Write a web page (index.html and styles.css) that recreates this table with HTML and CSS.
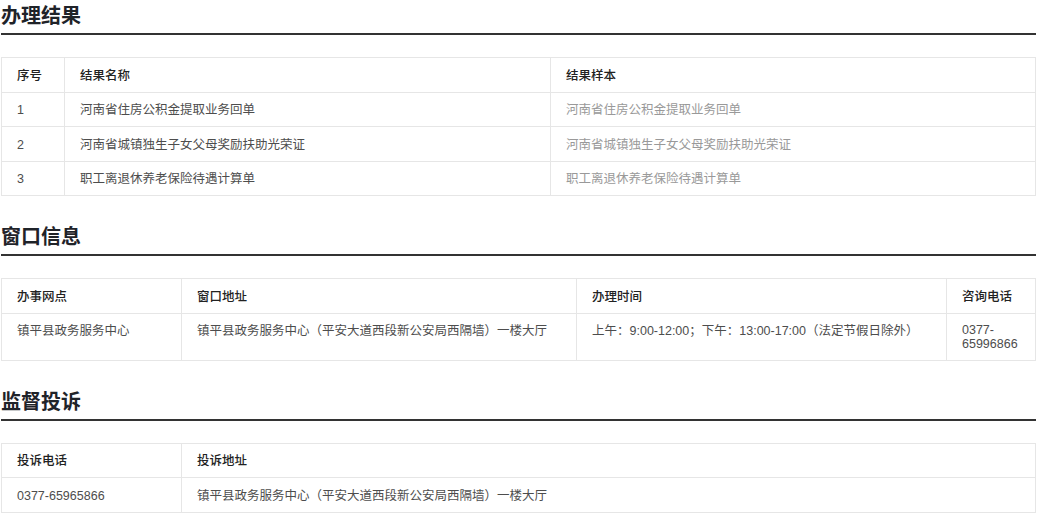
FILE: index.html
```html
<!DOCTYPE html>
<html lang="zh-CN">
<head>
<meta charset="utf-8">
<title>办理结果</title>
<link rel="stylesheet" href="styles.css">
</head>
<body>
<div class="page">
  <section class="section">
    <h2 class="sec-title">办理结果</h2>
    <table class="info-table">
      <colgroup>
        <col class="c-no">
        <col class="c-name">
        <col>
      </colgroup>
      <thead>
        <tr><th>序号</th><th>结果名称</th><th>结果样本</th></tr>
      </thead>
      <tbody>
        <tr><td>1</td><td>河南省住房公积金提取业务回单</td><td class="muted">河南省住房公积金提取业务回单</td></tr>
        <tr><td>2</td><td>河南省城镇独生子女父母奖励扶助光荣证</td><td class="muted">河南省城镇独生子女父母奖励扶助光荣证</td></tr>
        <tr><td>3</td><td>职工离退休养老保险待遇计算单</td><td class="muted">职工离退休养老保险待遇计算单</td></tr>
      </tbody>
    </table>
  </section>

  <section class="section">
    <h2 class="sec-title">窗口信息</h2>
    <table class="info-table">
      <colgroup>
        <col class="c-site">
        <col class="c-addr">
        <col class="c-time">
        <col>
      </colgroup>
      <thead>
        <tr><th>办事网点</th><th>窗口地址</th><th>办理时间</th><th>咨询电话</th></tr>
      </thead>
      <tbody>
        <tr>
          <td>镇平县政务服务中心</td>
          <td>镇平县政务服务中心（平安大道西段新公安局西隔墙）一楼大厅</td>
          <td>上午：9:00-12:00；下午：13:00-17:00（法定节假日除外）</td>
          <td class="tight">0377-65996866</td>
        </tr>
      </tbody>
    </table>
  </section>

  <section class="section">
    <h2 class="sec-title">监督投诉</h2>
    <table class="info-table">
      <colgroup>
        <col class="c-site">
        <col>
      </colgroup>
      <thead>
        <tr><th>投诉电话</th><th>投诉地址</th></tr>
      </thead>
      <tbody>
        <tr><td>0377-65965866</td><td>镇平县政务服务中心（平安大道西段新公安局西隔墙）一楼大厅</td></tr>
      </tbody>
    </table>
  </section>
</div>
</body>
</html>
```
FILE: styles.css
```css
html, body {
  margin: 0;
  padding: 0;
  background: #ffffff;
}

body {
  font-family: "Liberation Sans", "Noto Sans CJK SC", sans-serif;
  color: #333333;
}

.page {
  width: 1035px;
  margin-left: 1px;
}

.section + .section {
  margin-top: 25px;
}

.sec-title {
  margin: 0;
  font-family: "Noto Sans CJK SC", sans-serif;
  font-size: 20px;
  font-weight: 700;
  line-height: 28px;
  color: #1f2329;
  padding-top: 1px;
  padding-bottom: 4px;
  border-bottom: 2px solid #333333;
}

.info-table {
  width: 100%;
  margin-top: 22px;
  border-collapse: collapse;
  table-layout: fixed;
  border: 1px solid #e6e6e6;
  font-size: 12.5px;
  line-height: 14px;
}

.info-table th,
.info-table td {
  border: 1px solid #e6e6e6;
  padding: 10.5px 15px 9px;
  text-align: left;
  vertical-align: top;
}

.info-table td.tight {
  line-height: 13.5px;
  padding-bottom: 8.5px;
}

.info-table th {
  font-weight: 500;
  color: #222222;
}

.info-table td {
  color: #4d4d4d;
}

.info-table td.muted {
  color: #999999;
}

.c-no { width: 63px; }
.c-name { width: 486px; }
.c-site { width: 180px; }
.c-addr { width: 395px; }
.c-time { width: 370px; }
```
